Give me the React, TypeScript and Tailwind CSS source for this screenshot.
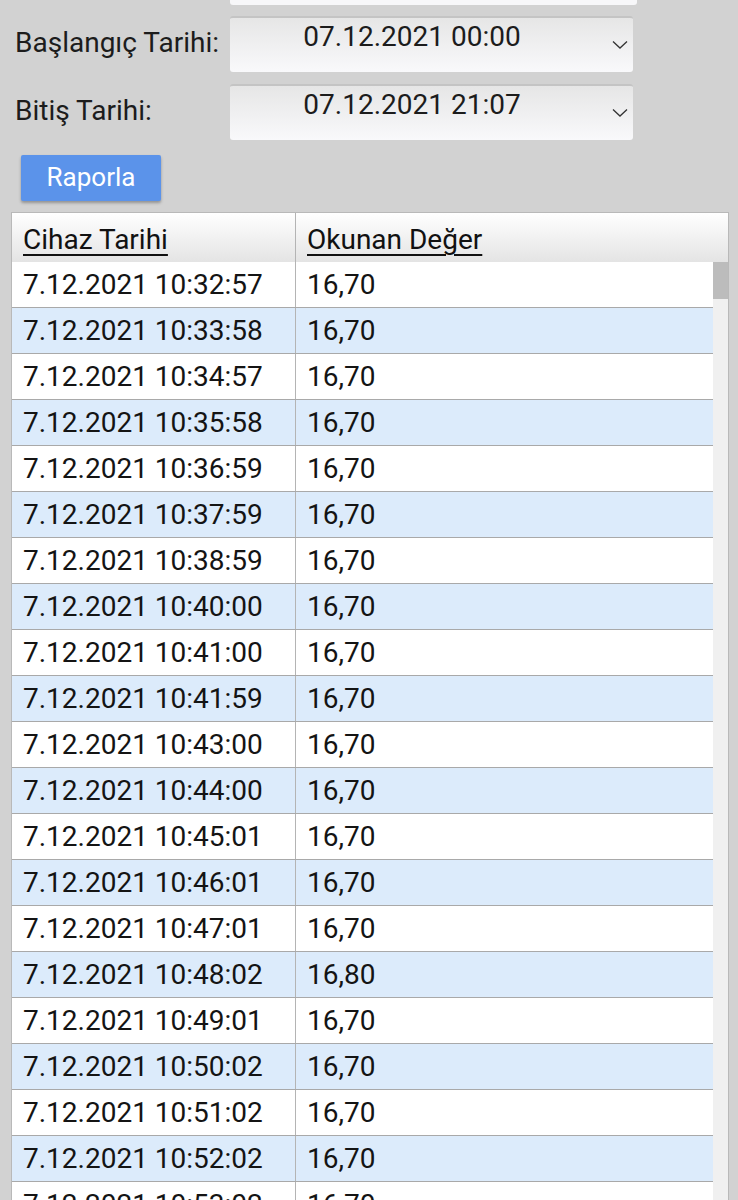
const rows = [
  ['7.12.2021 10:32:57', '16,70'],
  ['7.12.2021 10:33:58', '16,70'],
  ['7.12.2021 10:34:57', '16,70'],
  ['7.12.2021 10:35:58', '16,70'],
  ['7.12.2021 10:36:59', '16,70'],
  ['7.12.2021 10:37:59', '16,70'],
  ['7.12.2021 10:38:59', '16,70'],
  ['7.12.2021 10:40:00', '16,70'],
  ['7.12.2021 10:41:00', '16,70'],
  ['7.12.2021 10:41:59', '16,70'],
  ['7.12.2021 10:43:00', '16,70'],
  ['7.12.2021 10:44:00', '16,70'],
  ['7.12.2021 10:45:01', '16,70'],
  ['7.12.2021 10:46:01', '16,70'],
  ['7.12.2021 10:47:01', '16,70'],
  ['7.12.2021 10:48:02', '16,80'],
  ['7.12.2021 10:49:01', '16,70'],
  ['7.12.2021 10:50:02', '16,70'],
  ['7.12.2021 10:51:02', '16,70'],
  ['7.12.2021 10:52:02', '16,70'],
  ['7.12.2021 10:53:02', '16,70'],
];

const Chevron = () => (
  <svg width="16" height="10" viewBox="0 0 16 10" fill="none">
    <path d="M1 1.5 L8 8 L15 1.5" stroke="#333" strokeWidth="1.3" />
  </svg>
);

const DateSelect = ({ label, value }: { label: string; value: string }) => (
  <div className="flex items-center">
    <div className="w-[230px] pb-[3px] pl-[15px] text-[28px] text-[#1c1c1c]">{label}</div>
    <div className="flex h-[56px] w-[403px] rounded-[3px] border-t-2 border-[#c4c4c4] bg-gradient-to-b from-[#e6e6e6] to-[#f9f9fb]">
      <div className="w-[364px] pt-[4px] text-center text-[28px] leading-[30px] text-[#1c1c1c]">{value}</div>
      <div className="flex flex-1 items-center justify-end pr-[5px]">
        <Chevron />
      </div>
    </div>
  </div>
);

const App = () => {
  return (
    <div className="h-[1200px] overflow-hidden bg-[#d2d2d2] font-['Roboto',sans-serif]">
      <div className="pl-[230px]">
        <div className="h-[5px] w-[407px] rounded-b-[3px] bg-[#f7f7f9]"></div>
      </div>

      <div className="mt-[11px]">
        <DateSelect label="Başlangıç Tarihi:" value="07.12.2021 00:00" />
      </div>
      <div className="mt-[12px]">
        <DateSelect label="Bitiş Tarihi:" value="07.12.2021 21:07" />
      </div>

      <div className="mt-[15px] pl-[21px]">
        <button className="h-[46px] w-[140px] rounded-[2px] bg-[#5b93ea] pb-[2px] text-[26px] text-white shadow-[0_2px_3px_rgba(0,0,0,0.3)]">
          Raporla
        </button>
      </div>

      <div className="ml-[11px] mt-[11px] w-[718px] border border-[#b9b9b9] bg-white">
        <div className="flex h-[49px] bg-gradient-to-b from-white to-[#e4e4e4] text-[28px] text-[#111]">
          <div className="flex w-[284px] items-end border-r border-[#b4b4b4] pb-[8px] pl-[11px]">
            <span className="leading-none underline decoration-2 underline-offset-[5px]">Cihaz Tarihi</span>
          </div>
          <div className="flex flex-1 items-end pb-[8px] pl-[11px]">
            <span className="leading-none underline decoration-2 underline-offset-[5px]">Okunan Değer</span>
          </div>
        </div>
        <div className="flex">
          <div className="flex-1">
            {rows.map((r, i) => (
              <div
                key={i}
                className={`flex h-[46px] items-center border-b border-[#a9a9a9] text-[28px] text-[#141414] ${
                  i % 2 === 1 ? 'bg-[#dcebfb]' : 'bg-white'
                }`}
              >
                <div className="flex h-full w-[284px] items-center border-r border-[#b4b4b4] pl-[11px]">{r[0]}</div>
                <div className="pl-[11px]">{r[1]}</div>
              </div>
            ))}
          </div>
          <div className="w-[15px] bg-[#f0f0f0]">
            <div className="h-[37px] bg-[#bcbcbc]"></div>
          </div>
        </div>
      </div>
    </div>
  );
};

export default App;
